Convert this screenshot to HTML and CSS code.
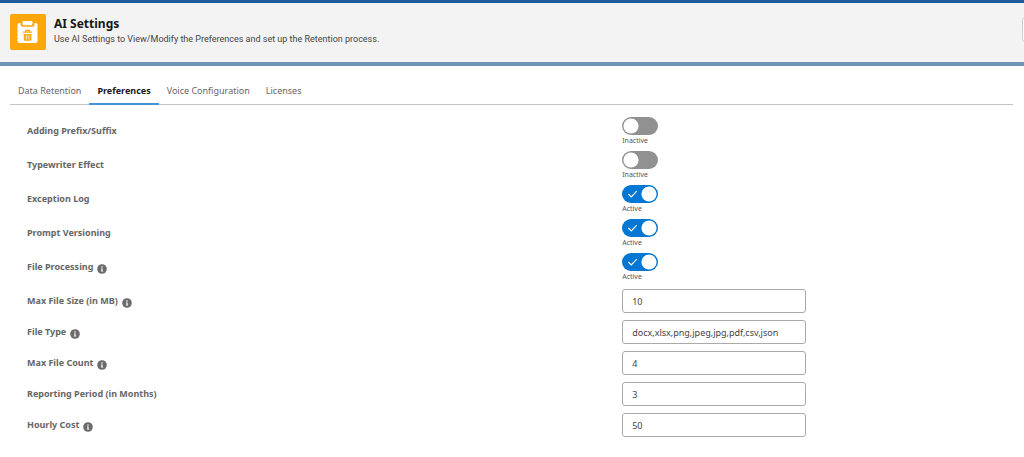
FILE: index.html
```html
<!DOCTYPE html>
<html lang="en">
<head>
<meta charset="utf-8">
<title>AI Settings</title>
<meta name="viewport" content="width=device-width, initial-scale=1">
<link rel="stylesheet" href="styles.css">
</head>
<body>
<svg class="defs" aria-hidden="true">
  <symbol id="info" viewBox="0 0 10 10">
    <circle cx="5" cy="5" r="4.8" fill="#6b6b6b"/>
    <circle cx="5" cy="3" r=".8" fill="#fff"/>
    <path d="M4 4.4h1.6v2.3H6.200v.8H3.900v-.8h.5V5.200H4z" fill="#fff"/>
  </symbol>
</svg>
<header class="page-header">
  <span class="app-icon">
    <svg viewBox="0 0 36 36" aria-hidden="true">
      <path d="M10.500 9H9.300A1.800 1.800 0 0 0 7.500 10.800V27.200A1.800 1.800 0 0 0 9.300 29H25.700A1.800 1.800 0 0 0 27.500 27.200V10.800A1.800 1.800 0 0 0 25.700 9H24.500V10.500A2.300 2.300 0 0 1 22.200 12.800H12.800A2.300 2.300 0 0 1 10.500 10.500z" fill="#fff"/>
      <rect x="12.500" y="7" width="10" height="4.200" rx="1.200" fill="#fff"/>
      <path d="M13 18.200h9.200M15.800 18v-1.700h3.600V18" fill="none" stroke="#fca60a" stroke-width="1.200"/>
      <path d="M13.800 20h7.600v5.800a1 1 0 0 1-1 1h-5.600a1 1 0 0 1-1-1z" fill="#fca60a"/>
      <path d="M16.300 21.200v4.200M18.900 21.200v4.200" stroke="#fff" stroke-width=".9"/>
    </svg>
  </span>
  <div class="titles">
    <h1>AI Settings</h1>
    <p>Use AI Settings to View/Modify the Preferences and set up the Retention process.</p>
  </div>
  <button class="edge-button" type="button" aria-label="More actions"></button>
</header>
<main>
  <nav class="tabs">
    <a href="#retention">Data Retention</a>
    <a href="#preferences" class="current" aria-current="page">Preferences</a>
    <a href="#voice">Voice Configuration</a>
    <a href="#licenses">Licenses</a>
  </nav>
  <form class="settings">
    <div class="group">
      <div class="row switch-row"><label for="prefix">Adding Prefix/Suffix</label><div class="control"><input type="checkbox" class="switch" id="prefix"><span class="state">Inactive</span></div></div>
      <div class="row switch-row"><label for="typewriter">Typewriter Effect</label><div class="control"><input type="checkbox" class="switch" id="typewriter"><span class="state">Inactive</span></div></div>
      <div class="row switch-row"><label for="log">Exception Log</label><div class="control"><input type="checkbox" class="switch" id="log" checked><span class="state">Active</span></div></div>
      <div class="row switch-row"><label for="versioning">Prompt Versioning</label><div class="control"><input type="checkbox" class="switch" id="versioning" checked><span class="state">Active</span></div></div>
      <div class="row switch-row"><label for="processing">File Processing<svg class="info"><use href="#info"/></svg></label><div class="control"><input type="checkbox" class="switch" id="processing" checked><span class="state">Active</span></div></div>
    </div>
    <div class="group">
      <div class="row"><label for="size">Max File Size (in MB)<svg class="info"><use href="#info"/></svg></label><input type="text" class="field" id="size" value="10"></div>
      <div class="row"><label for="type">File Type<svg class="info"><use href="#info"/></svg></label><input type="text" class="field" id="type" value="docx,xlsx,png,jpeg,jpg,pdf,csv,json"></div>
      <div class="row"><label for="count">Max File Count<svg class="info"><use href="#info"/></svg></label><input type="text" class="field" id="count" value="4"></div>
      <div class="row"><label for="period">Reporting Period (in Months)</label><input type="text" class="field" id="period" value="3"></div>
      <div class="row"><label for="cost">Hourly Cost<svg class="info"><use href="#info"/></svg></label><input type="text" class="field" id="cost" value="50"></div>
    </div>
  </form>
</main>
</body>
</html>
```
FILE: styles.css
```css
* { box-sizing: border-box; }

body {
  margin: 0;
  background: #fff;
  color: #444;
  font-family: "Segoe UI", "Noto Sans", sans-serif;
  font-size: 9px;
}

.defs { display: none; }

.page-header {
  display: flex;
  align-items: flex-start;
  gap: 8px;
  padding: 11px 0 12px 10px;
  overflow: hidden;
  background: #f3f3f3;
  border-top: 3px solid #205c9b;
  border-bottom: 4px solid #6f94b8;
}

.app-icon {
  display: block;
  flex: none;
  width: 36px;
  height: 36px;
  border-radius: 2px;
  background: #fca60a;
}

.app-icon svg { display: block; }

.titles { flex: 1; }

h1 {
  margin: 1px 0 0;
  color: #181818;
  font-size: 12px;
  line-height: 18px;
}

.titles p {
  margin: 0;
  font-family: "Segoe UI", Roboto, sans-serif;
  font-size: 9px;
  line-height: 12px;
}

.edge-button {
  width: 20px;
  height: 25px;
  margin: 3px -18px 0 0;
  border: 1px solid #ccc;
  border-radius: 3px;
  background: #fff;
}

.tabs {
  display: flex;
  margin: 12px 11px 0 10px;
  border-bottom: 1px solid #c4c4c4;
}

.tabs a {
  height: 27px;
  margin-bottom: -1px;
  padding: 0 8px;
  border-bottom: 2px solid transparent;
  color: #666;
  line-height: 26px;
  text-decoration: none;
}

.tabs .current {
  border-color: #4a90d9;
  color: #181818;
  font-weight: 700;
}

.settings {
  display: grid;
  gap: 2px;
  margin: 12px 5px 0 27px;
}

.row {
  display: grid;
  grid-template-columns: 60% 1fr;
  align-items: start;
  height: 31px;
}

.switch-row { height: 34px; }

.row label {
  color: #666;
  font-weight: 700;
  line-height: 24px;
}

.switch-row label { line-height: 28px; }

.info {
  width: 10px;
  height: 10px;
  margin-left: 4px;
  vertical-align: -4px;
}

.control {
  display: grid;
  justify-items: start;
}

.switch {
  appearance: none;
  width: 36px;
  height: 18px;
  margin: 0;
  border-radius: 9px;
  background: url("data:image/svg+xml,%3Csvg xmlns='http://www.w3.org/2000/svg' viewBox='0 0 36 18'%3E%3Ccircle cx='9' cy='9' r='7.600' fill='white'/%3E%3C/svg%3E") #919191;
}

.switch:checked {
  background: url("data:image/svg+xml,%3Csvg xmlns='http://www.w3.org/2000/svg' viewBox='0 0 36 18'%3E%3Ccircle cx='27' cy='9' r='7.600' fill='white'/%3E%3Cpath d='M6.300 9l3 3 5.500-5.800' fill='none' stroke='white' stroke-width='1.200'/%3E%3C/svg%3E") #0176d3;
}

.state {
  color: #555;
  font-size: 7px;
  line-height: 12px;
}

.field {
  width: 184px;
  height: 24px;
  padding: 0 9px;
  border: 1px solid #aaa;
  border-radius: 3px;
  background: #fff;
  color: #444;
  font: inherit;
}
```
